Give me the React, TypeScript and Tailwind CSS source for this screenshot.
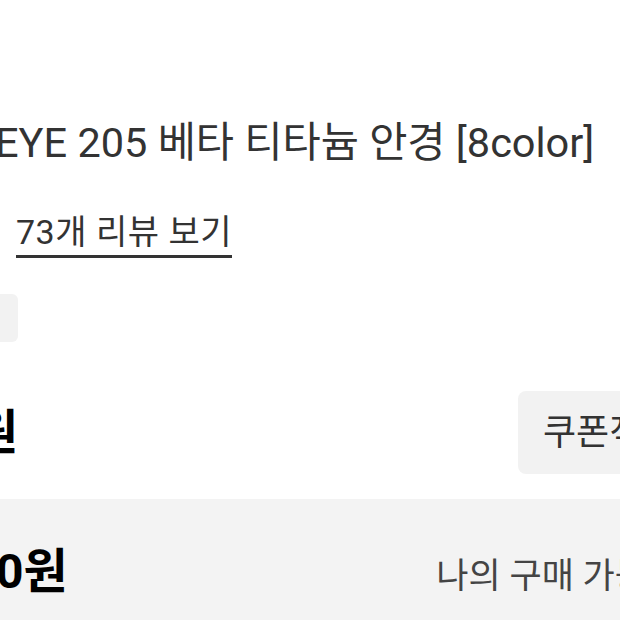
import React from "react";

const font = { fontFamily: 'Roboto, "Noto Sans CJK KR", "Noto Sans", sans-serif' };

export default function App() {
    return (
        <div className="w-[620px] h-[620px] overflow-hidden bg-white" style={font}>
            <div className="pt-[119px]">
                {/* Product title */}
                <h1 className="ml-[-5px] whitespace-nowrap text-[41.5px] leading-[48px] font-normal text-[#333]">
                    EYE 205 베타 티타늄 안경 [8color]
                </h1>

                {/* Reviews link */}
                <div className="mt-[45px] pl-[16px]">
                    <a className="inline-block border-b-[3px] border-[#333] pb-[3px] text-[34px] leading-[40px] tracking-[0.5px] text-[#333]">
                        73개 리뷰 보기
                    </a>
                </div>

                {/* Tag chip */}
                <div className="mt-[36px] ml-[-42px] h-[48px] w-[60px] rounded-md bg-[#f2f2f2]" />

                {/* Price + coupon */}
                <div className="mt-[49px] flex items-center whitespace-nowrap">
                    <span className="ml-[-26px] text-[48px] leading-[56px] font-bold text-black">
                        원
                    </span>
                    <div className="flex-1" />
                    <button className="mr-[-60px] h-[83px] w-[162px] shrink-0 rounded-lg bg-[#f2f2f2] pl-[25px] text-left text-[36px] text-[#333]">
                        쿠폰적용
                    </button>
                </div>

                {/* Purchasable amount band */}
                <div className="mt-[25px] flex h-[140px] items-baseline justify-between whitespace-nowrap bg-[#f3f3f3] pt-[45px]">
                    <span className="ml-[-4px] text-[48px] leading-[56px] font-bold text-black">0원</span>
                    <span className="mr-[-100px] text-[35px] text-[#444]">나의 구매 가능 금액</span>
                </div>
            </div>
        </div>
    );
}
